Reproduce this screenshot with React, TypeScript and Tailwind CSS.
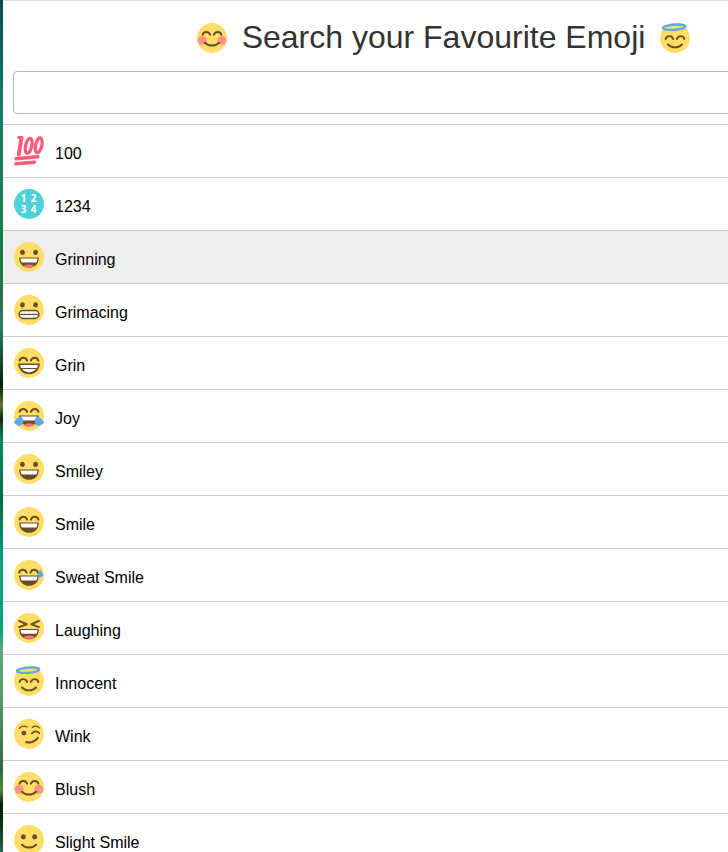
import React from "react";

const D = "#664e27";
const Y = "#ffdd67";
const B = "#5aa9ec";
const dots = (
  <>
    <ellipse cx="18" cy="22" rx="5" ry="5.500" fill={D} />
    <ellipse cx="46" cy="22" rx="5" ry="5.500" fill={D} />
  </>
);
const arcs = (
  <g fill="none" stroke={D} strokeWidth="4.200" strokeLinecap="round">
    <path d="M12 27c2-8 13-8 16 0" />
    <path d="M36 27c3-8 14-8 16 0" />
  </g>
);
const smileLine = <path d="M17 42c8 8 22 8 30 0" fill="none" stroke={D} strokeWidth="4.200" strokeLinecap="round" />;
const openMouth = (tongue: boolean, top = 34) => (
  <>
    <path d={`M11 ${top}h42c0 14-9 22-21 22s-21-8-21-22z`} fill={D} />
    <path d={`M14 ${top + 2}h36c0 3-.8 6-2.200 8.500H16.200C14.800 ${top + 8} 14 ${top + 5} 14 ${top + 2}z`} fill="#fff" />
    {tongue && <path d="M20 52c6-5 18-5 24 0-7 4-17 4-24 0z" fill="#ff717f" />}
  </>
);
const teeth = (
  <>
    <path d="M9 33h46c0 13-10 23-23 23S9 46 9 33z" fill={D} />
    <path d="M13 36h38c-.4 2.500-1 4.500-2 6.500H15c-1-2-1.600-4-2-6.500z" fill="#fff" />
    <path d="M17 45h30c-3.500 4-9 7-15 7s-11.500-3-15-7z" fill="#fff" />
  </>
);

const Face = ({ children }: { children?: React.ReactNode }) => (
  <svg viewBox="0 0 64 64" className="w-[30px] h-[30px] shrink-0 block">
    <circle cx="32" cy="32" r="32" fill={Y} />
    {children}
  </svg>
);

const Hundred = () => (
  <svg viewBox="0 0 30 30" className="w-[30px] h-[30px] shrink-0 block">
    <g fill="none" stroke="#ff5a79" strokeLinecap="round">
      <path d="M7.500 1.500 H4.800" strokeWidth="3" />
      <path d="M7.500 2 4.800 18.500" strokeWidth="4" />
      <ellipse cx="14.700" cy="9.800" rx="3.100" ry="7.600" strokeWidth="3.200" transform="rotate(12 14.700 9.800)" />
      <ellipse cx="24.700" cy="9.300" rx="3.100" ry="7.600" strokeWidth="3.200" transform="rotate(12 24.700 9.300)" />
      <path d="M2 22.800 24 20.800" strokeWidth="3.400" />
      <path d="M2 27.800 20.500 26.200" strokeWidth="3.400" />
    </g>
  </svg>
);

const Numbers = () => (
  <svg viewBox="0 0 30 30" className="w-[30px] h-[30px] shrink-0 block">
    <circle cx="15" cy="15" r="15" fill="#4fd1d9" />
    <g fill="#fff" fontSize="10" fontWeight="700" fontFamily="'Open Sans', sans-serif" textAnchor="middle" letterSpacing="0.800">
      <text x="15" y="13">1 2</text>
      <text x="15" y="23.500">3 4</text>
    </g>
  </svg>
);

const Grinning = () => <Face>{dots}{openMouth(true, 33)}</Face>;
const Grimacing = () => (
  <Face>
    <ellipse cx="18" cy="21" rx="5" ry="5.500" fill={D} />
    <ellipse cx="46" cy="21" rx="5" ry="5.500" fill={D} />
    <rect x="11" y="33" width="42" height="17" rx="8" fill="#fff" stroke={D} strokeWidth="3" />
    <path d="M11 41.500h42" stroke={D} strokeWidth="2.500" />
    <path d="M23 34v15M32 34v15M41 34v15" stroke={D} strokeWidth="1" opacity="0.350" />
  </Face>
);
const Grin = () => <Face>{arcs}{teeth}</Face>;
const Joy = () => (
  <Face>
    <g transform="translate(0 -4)">{arcs}</g>
    {openMouth(true, 31)}
    <path d="M0 46c2-6 8-12 16-13 4 6 6 13 1 18-5 3-13 2-17-5z" fill={B} />
    <path d="M64 46c-2-6-8-12-16-13-4 6-6 13-1 18 5 3 13 2 17-5z" fill={B} />
  </Face>
);
const Smiley = () => <Face>{dots}{openMouth(false, 33)}</Face>;
const SmileE = () => <Face>{arcs}{openMouth(false, 33)}</Face>;
const Sweat = () => (
  <Face>
    <g transform="translate(-1 0)">{arcs}</g>
    {openMouth(false, 33)}
    <path d="M56 19c-1.500 5-6 9-6 13 0 3 2.500 5.500 6 5.500s6-2.500 6-5.500c0-4-4.500-8-6-13z" fill={B} />
  </Face>
);
const Laughing = () => (
  <Face>
    <g fill="none" stroke={D} strokeWidth="4.200" strokeLinecap="round" strokeLinejoin="round">
      <path d="M11 17l16 7-16 6" />
      <path d="M53 17l-16 7 16 6" />
    </g>
    {openMouth(true, 34)}
  </Face>
);
const Innocent = () => (
  <Face>
    <g transform="translate(0 7)">{arcs}</g>
    <g transform="translate(0 4)">{smileLine}</g>
    <ellipse cx="30" cy="9" rx="24" ry="5.500" fill="none" stroke={B} strokeWidth="4.800" transform="rotate(-4 30 9)" />
  </Face>
);
const Wink = () => (
  <Face>
    <circle cx="21" cy="30" r="5.200" fill={D} />
    <g fill="none" stroke={D} strokeLinecap="round">
      <path d="M11 20c4-5 11-6 17-3" strokeWidth="2.600" />
      <path d="M39 18c5-4 11-4 15 1" strokeWidth="2.600" />
      <path d="M38 31c4-6 11-6 16-1" strokeWidth="3.400" />
      <path d="M26 49c9 3 20-1 25-9" strokeWidth="4.200" />
    </g>
  </Face>
);
const Blush = () => (
  <Face>
    <circle cx="11" cy="37" r="9.500" fill="#ff8e8e" />
    <circle cx="53" cy="37" r="9.500" fill="#ff8e8e" />
    <g transform="translate(0 -2)">{arcs}</g>
    {smileLine}
  </Face>
);
const Slight = () => (
  <Face>
    <ellipse cx="20" cy="25" rx="5" ry="5.500" fill={D} />
    <ellipse cx="44" cy="25" rx="5" ry="5.500" fill={D} />
    {smileLine}
  </Face>
);

const rows: { name: string; Icon: React.FC; active?: boolean }[] = [
  { name: "100", Icon: Hundred },
  { name: "1234", Icon: Numbers },
  { name: "Grinning", Icon: Grinning, active: true },
  { name: "Grimacing", Icon: Grimacing },
  { name: "Grin", Icon: Grin },
  { name: "Joy", Icon: Joy },
  { name: "Smiley", Icon: Smiley },
  { name: "Smile", Icon: SmileE },
  { name: "Sweat Smile", Icon: Sweat },
  { name: "Laughing", Icon: Laughing },
  { name: "Innocent", Icon: Innocent },
  { name: "Wink", Icon: Wink },
  { name: "Blush", Icon: Blush },
  { name: "Slight Smile", Icon: Slight },
];

export default function App() {
  return (
    <div className="flex w-[728px] h-[852px] overflow-hidden bg-white font-['Liberation_Sans',Arial,sans-serif] text-black">
      <div className="w-[3px] shrink-0 bg-[linear-gradient(180deg,#0a4a52_0px,#0d5f5c_40px,#167a62_100px,#1e7d5c_170px,#1c7a48_260px,#2a6f4f_300px,#2c7f6b_325px,#0f3d22_370px,#031a08_385px,#5c7a34_405px,#0d2a12_418px,#0a8a62_440px,#066a48_500px,#0aa078_560px,#0aa078_630px,#5ea67f_650px,#5a9a6a_700px,#2e6a4a_770px,#4f8a30_790px,#031a0a_805px,#0f3a1e_830px,#2a6a48_852px)]" />
      <div className="w-[881px] shrink-0">
        <div className="h-[1px] bg-[#dddddd]" />
        <h1 className="h-[70px] flex items-center justify-center gap-[15px] pt-[3px] text-[32px] leading-none text-[#333333] font-normal">
          <Blush />
          <span className="pb-[2px]">Search your Favourite Emoji</span>
          <Innocent />
        </h1>
        <div className="px-[10px]">
          <input
            type="text"
            aria-label="Search"
            className="block w-full h-[43px] rounded-[4px] border border-[#b9b9b9] bg-white outline-none"
          />
        </div>
        <ul className="mt-[10px]">
          {rows.map(({ name, Icon, active }) => (
            <li
              key={name}
              className={`h-[53px] border-t border-[#cccccc] flex items-center gap-[11px] pl-[11px] ${active ? "bg-[#eeeeee]" : "bg-white"}`}
            >
              <Icon />
              <span className="text-[16px] leading-none pt-[6px]">{name}</span>
            </li>
          ))}
        </ul>
      </div>
    </div>
  );
}
